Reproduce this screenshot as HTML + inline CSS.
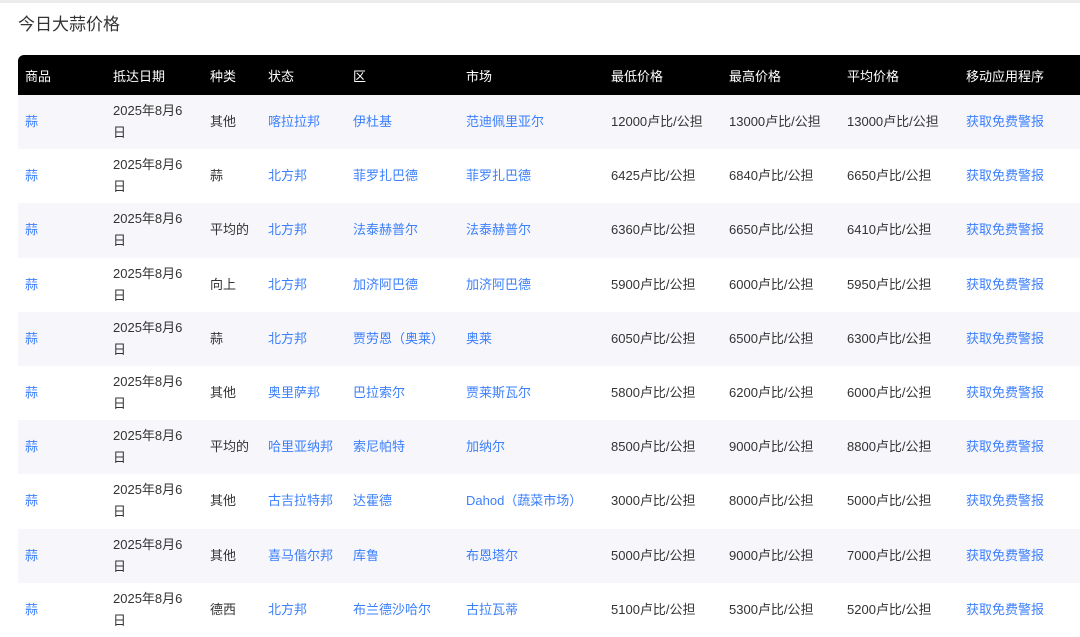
<!DOCTYPE html>
<html><head><meta charset="utf-8"><style>
body{margin:0;width:1080px;height:637px;overflow:hidden;background:#fff;font-family:"Liberation Sans","Noto Sans CJK SC",sans-serif;}
.top{position:absolute;left:0;top:0;width:1080px;height:3px;background:#ececec}
h1{position:absolute;left:18px;top:10px;margin:0;font-size:17px;font-weight:normal;color:#333}
table{position:absolute;left:18px;top:55px;border-collapse:separate;border-spacing:0;table-layout:fixed;width:1075px;font-size:13px}
th{background:#000;color:#fff;font-weight:normal;text-align:left;height:40px;padding:0 0 0 7px}
th:first-child{border-top-left-radius:6px}
th:last-child{border-top-right-radius:6px}
td{height:54.2px;padding:0 0 0 7px;color:#333;line-height:22px}
tr:nth-child(even) td{background:#f7f7fb}
.a{color:#3b7ffc}
</style></head><body>
<div class="top"></div>
<h1>今日大蒜价格</h1>
<table>
<colgroup><col style="width:88px"><col style="width:97px"><col style="width:58px"><col style="width:85px"><col style="width:113px"><col style="width:145px"><col style="width:118px"><col style="width:118px"><col style="width:119px"><col style="width:134px"></colgroup>
<tr><th>商品</th><th>抵达日期</th><th>种类</th><th>状态</th><th>区</th><th>市场</th><th>最低价格</th><th>最高价格</th><th>平均价格</th><th>移动应用程序</th></tr>
<tr><td class="a">蒜</td><td>2025年8月6<br>日</td><td>其他</td><td class="a">喀拉拉邦</td><td class="a">伊杜基</td><td class="a">范迪佩里亚尔</td><td>12000卢比/公担</td><td>13000卢比/公担</td><td>13000卢比/公担</td><td class="a">获取免费警报</td></tr>
<tr><td class="a">蒜</td><td>2025年8月6<br>日</td><td>蒜</td><td class="a">北方邦</td><td class="a">菲罗扎巴德</td><td class="a">菲罗扎巴德</td><td>6425卢比/公担</td><td>6840卢比/公担</td><td>6650卢比/公担</td><td class="a">获取免费警报</td></tr>
<tr><td class="a">蒜</td><td>2025年8月6<br>日</td><td>平均的</td><td class="a">北方邦</td><td class="a">法泰赫普尔</td><td class="a">法泰赫普尔</td><td>6360卢比/公担</td><td>6650卢比/公担</td><td>6410卢比/公担</td><td class="a">获取免费警报</td></tr>
<tr><td class="a">蒜</td><td>2025年8月6<br>日</td><td>向上</td><td class="a">北方邦</td><td class="a">加济阿巴德</td><td class="a">加济阿巴德</td><td>5900卢比/公担</td><td>6000卢比/公担</td><td>5950卢比/公担</td><td class="a">获取免费警报</td></tr>
<tr><td class="a">蒜</td><td>2025年8月6<br>日</td><td>蒜</td><td class="a">北方邦</td><td class="a">贾劳恩（奥莱）</td><td class="a">奥莱</td><td>6050卢比/公担</td><td>6500卢比/公担</td><td>6300卢比/公担</td><td class="a">获取免费警报</td></tr>
<tr><td class="a">蒜</td><td>2025年8月6<br>日</td><td>其他</td><td class="a">奥里萨邦</td><td class="a">巴拉索尔</td><td class="a">贾莱斯瓦尔</td><td>5800卢比/公担</td><td>6200卢比/公担</td><td>6000卢比/公担</td><td class="a">获取免费警报</td></tr>
<tr><td class="a">蒜</td><td>2025年8月6<br>日</td><td>平均的</td><td class="a">哈里亚纳邦</td><td class="a">索尼帕特</td><td class="a">加纳尔</td><td>8500卢比/公担</td><td>9000卢比/公担</td><td>8800卢比/公担</td><td class="a">获取免费警报</td></tr>
<tr><td class="a">蒜</td><td>2025年8月6<br>日</td><td>其他</td><td class="a">古吉拉特邦</td><td class="a">达霍德</td><td class="a">Dahod（蔬菜市场）</td><td>3000卢比/公担</td><td>8000卢比/公担</td><td>5000卢比/公担</td><td class="a">获取免费警报</td></tr>
<tr><td class="a">蒜</td><td>2025年8月6<br>日</td><td>其他</td><td class="a">喜马偕尔邦</td><td class="a">库鲁</td><td class="a">布恩塔尔</td><td>5000卢比/公担</td><td>9000卢比/公担</td><td>7000卢比/公担</td><td class="a">获取免费警报</td></tr>
<tr><td class="a">蒜</td><td>2025年8月6<br>日</td><td>德西</td><td class="a">北方邦</td><td class="a">布兰德沙哈尔</td><td class="a">古拉瓦蒂</td><td>5100卢比/公担</td><td>5300卢比/公担</td><td>5200卢比/公担</td><td class="a">获取免费警报</td></tr>
</table>
</body></html>
